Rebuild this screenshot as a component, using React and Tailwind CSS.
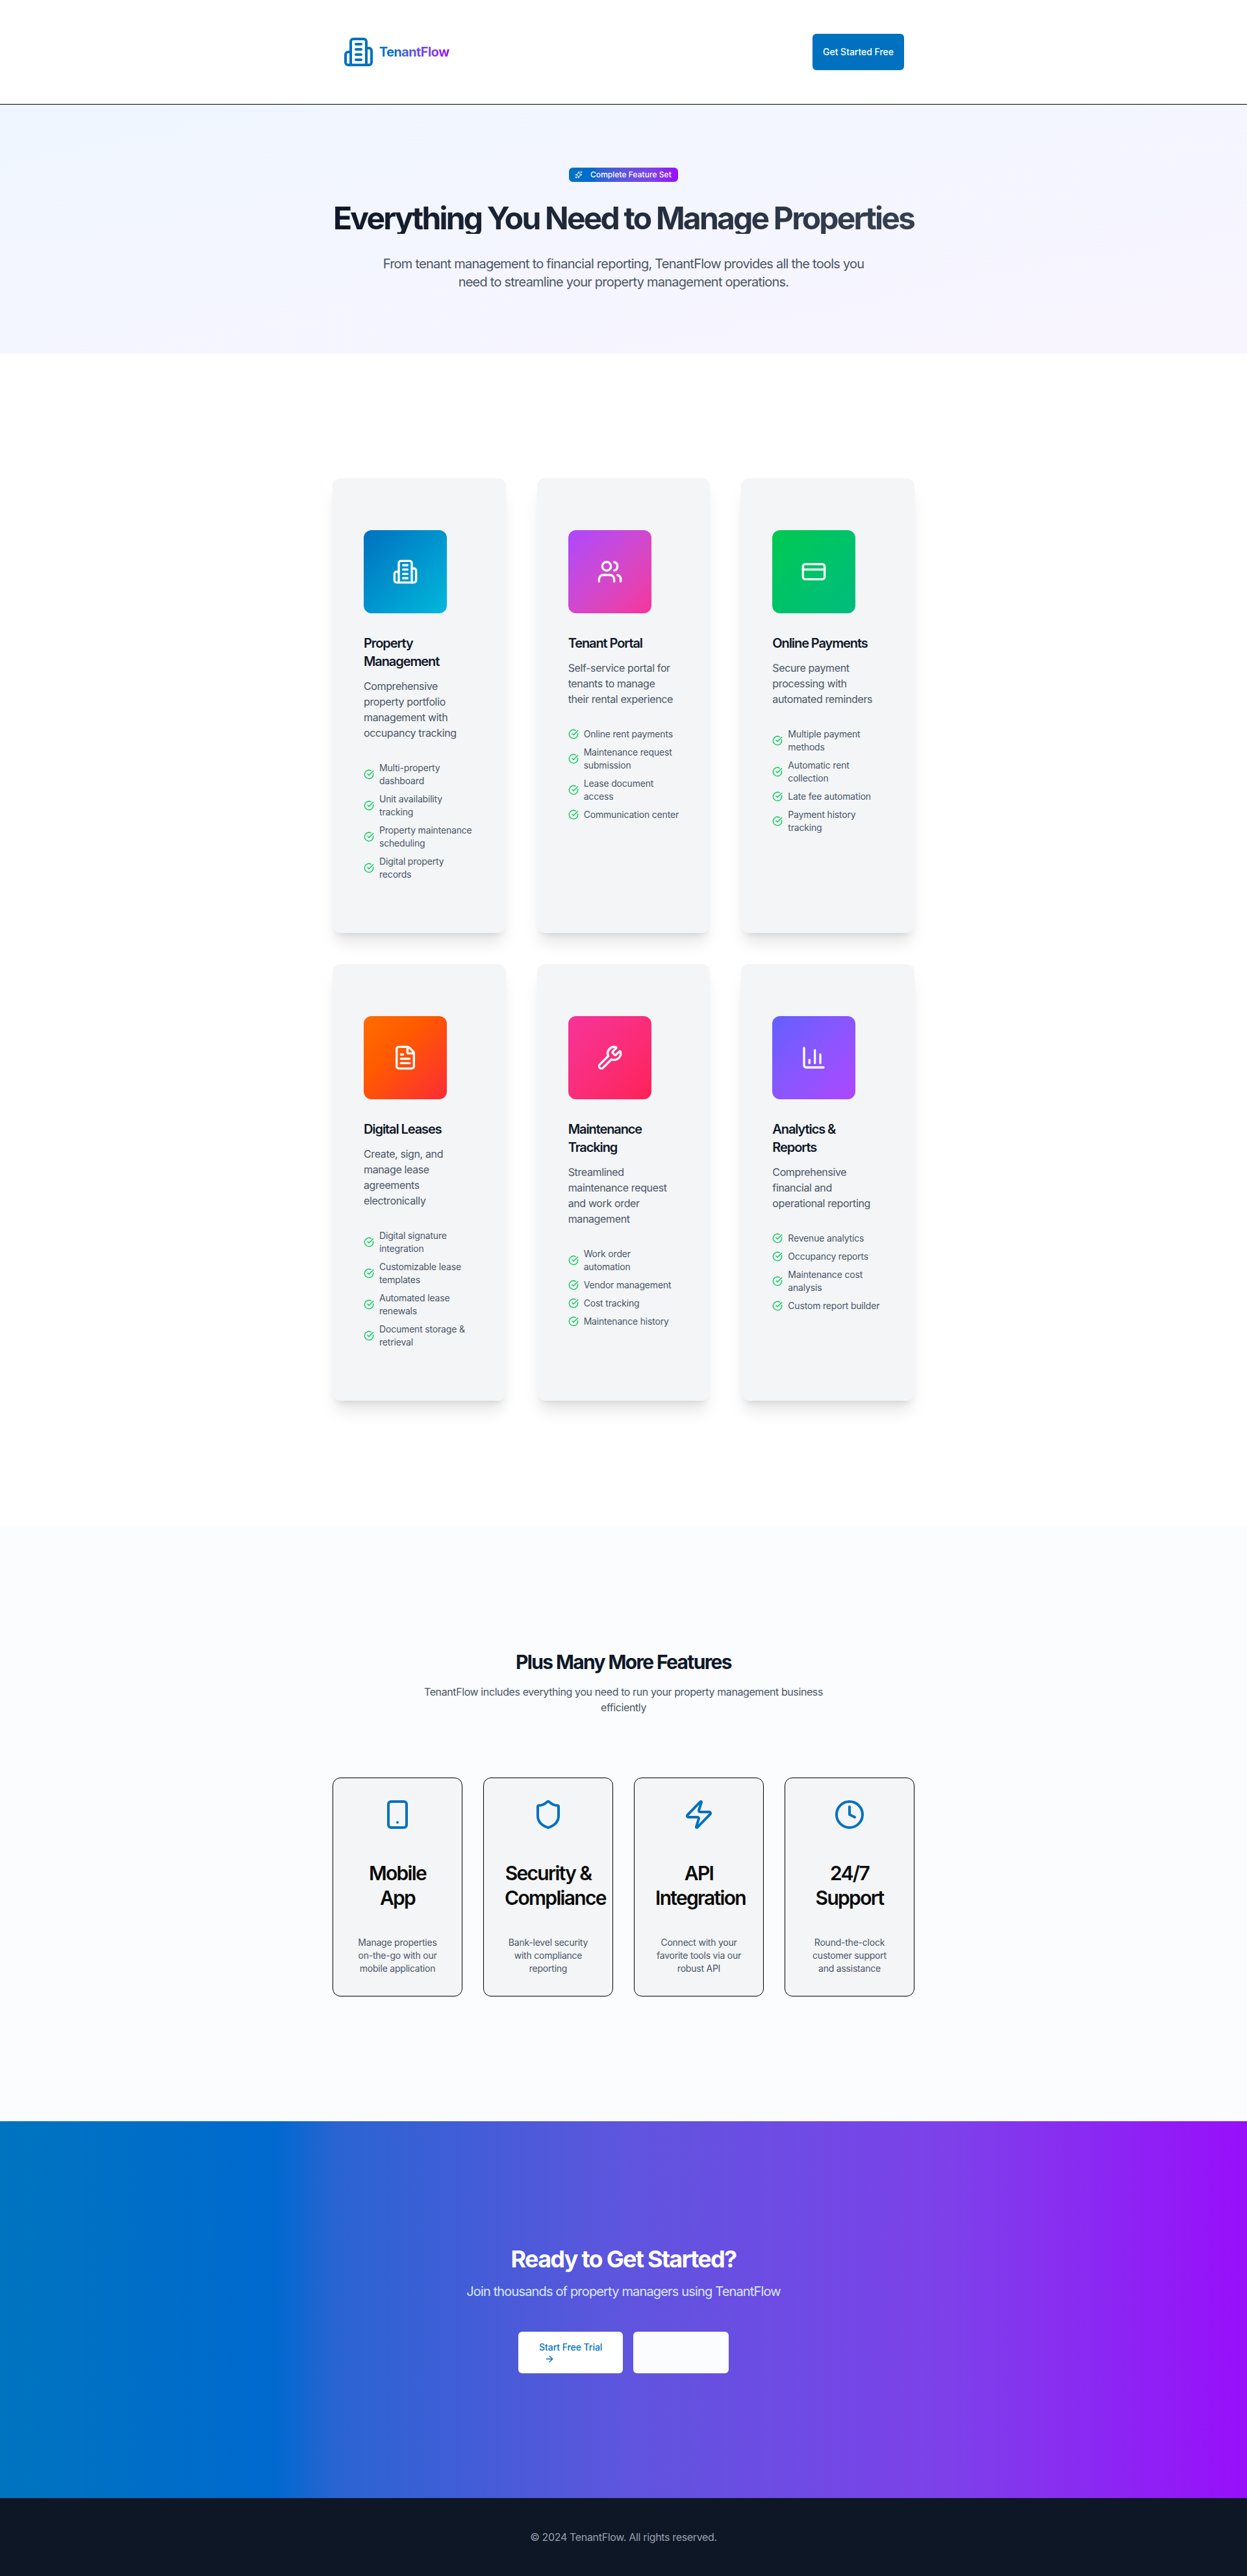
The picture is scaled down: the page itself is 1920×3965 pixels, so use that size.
import React from "react";
import {
  Users, CreditCard, FileText, Wrench, ChartColumn, CircleCheckBig,
  Smartphone, Shield, Zap, Clock, Sparkles, ArrowRight,
} from "lucide-react";

function Building({ className }) {
  return (
    <svg className={className} viewBox="0 0 24 24" fill="none" stroke="currentColor" strokeWidth="2" strokeLinecap="round" strokeLinejoin="round">
      <path d="M6 22V4a2 2 0 0 1 2-2h8a2 2 0 0 1 2 2v18Z" />
      <path d="M6 12H4a2 2 0 0 0-2 2v6a2 2 0 0 0 2 2h2" />
      <path d="M18 9h2a2 2 0 0 1 2 2v9a2 2 0 0 1-2 2h-2" />
      <path d="M10 6h4" />
      <path d="M10 10h4" />
      <path d="M10 14h4" />
      <path d="M10 18h4" />
    </svg>
  );
}

const features = [
  {
    icon: Building,
    tile: "bg-linear-to-br from-[#0071bf] to-[#00b8db]",
    title: "Property Management",
    text: "Comprehensive property portfolio management with occupancy tracking",
    items: ["Multi-property dashboard", "Unit availability tracking", "Property maintenance scheduling", "Digital property records"],
  },
  {
    icon: Users,
    tile: "bg-linear-to-br from-[#ad46ff] to-[#f6339a]",
    title: "Tenant Portal",
    text: "Self-service portal for tenants to manage\ntheir rental experience",
    items: ["Online rent payments", "Maintenance request submission", "Lease document access", "Communication center"],
  },
  {
    icon: CreditCard,
    tile: "bg-linear-to-br from-[#00c950] to-[#00bc7d]",
    title: "Online Payments",
    text: "Secure payment processing with automated reminders",
    items: ["Multiple payment methods", "Automatic rent collection", "Late fee automation", "Payment history tracking"],
  },
  {
    icon: FileText,
    tile: "bg-[linear-gradient(to_bottom_right,#ff6d00,#ff5a00_38%,#fb2c36)]",
    title: "Digital Leases",
    text: "Create, sign, and manage lease agreements electronically",
    items: ["Digital signature integration", "Customizable lease templates", "Automated lease renewals", "Document storage & retrieval"],
  },
  {
    icon: Wrench,
    tile: "bg-linear-to-br from-[#f6339a] to-[#ff2056]",
    title: "Maintenance Tracking",
    text: "Streamlined maintenance request and work order management",
    items: ["Work order automation", "Vendor management", "Cost tracking", "Maintenance history"],
  },
  {
    icon: ChartColumn,
    tile: "bg-linear-to-br from-[#615fff] to-[#ad46ff]",
    title: "Analytics &\nReports",
    text: "Comprehensive financial and operational reporting",
    items: ["Revenue analytics", "Occupancy reports", "Maintenance cost analysis", "Custom report builder"],
  },
];

const extras = [
  { icon: Smartphone, title: "Mobile App", text: "Manage properties on-the-go with our mobile application" },
  { icon: Shield, title: "Security & Compliance", text: "Bank-level security with compliance reporting" },
  { icon: Zap, title: "API Integration", text: "Connect with your favorite tools via our robust API" },
  { icon: Clock, title: "24/7 Support", text: "Round-the-clock customer support and assistance" },
];

function FeatureCard({ icon: Icon, tile, title, text, items }) {
  return (
    <div className="rounded-xl bg-[#f3f5f7] px-12 py-20 shadow-xl">
      <div className={"mb-8 flex size-32 items-center justify-center rounded-xl " + tile}>
        <Icon className="size-10 text-white" />
      </div>
      <h3 className="mb-3 text-xl font-semibold tracking-[-0.055em] whitespace-pre-line text-[#101828]">{title}</h3>
      <p className="mb-8 text-base tracking-[-0.023em] whitespace-pre-line text-[#4a5565]">{text}</p>
      <ul className="space-y-2">
        {items.map((item) => (
          <li key={item} className="flex items-center gap-2 text-sm tracking-[-0.013em] text-[#4a5565]">
            <CircleCheckBig className="size-4 shrink-0 text-[#00c950]" />
            <span>{item}</span>
          </li>
        ))}
      </ul>
    </div>
  );
}

export default function App() {
  return (
    <div className="min-h-screen bg-white font-['Inter',sans-serif]">
      <header className="border-b border-black bg-white">
        <div className="mx-auto flex h-40 max-w-4xl items-center justify-between px-4">
          <div className="flex items-center gap-2">
            <Building className="size-12 text-[#0071bf]" />
            <span className="bg-[linear-gradient(to_right,#0074bf,#0069cf_22%,#2a64d2_27%,#5f55de_50%,#7d41ea_76%,#980ffa)] bg-clip-text text-xl font-bold tracking-[-0.031em] text-transparent">TenantFlow</span>
          </div>
          <a className="flex h-14 items-center rounded-md bg-[#0071bf] px-4 text-sm font-medium tracking-[-0.002em] text-white">Get Started Free</a>
        </div>
      </header>

      <section className="bg-linear-to-br from-[#eff6ff] to-[#f9f5ff] pt-[97px] pb-24 text-center">
        <div className="mx-auto max-w-4xl">
          <div className="mx-auto mb-8 flex h-[22px] w-[168px] items-center rounded-md bg-[linear-gradient(to_right,#0074bf,#0069cf_22%,#2a64d2_27%,#5f55de_50%,#7d41ea_76%,#980ffa)] pl-[9px] text-xs font-medium tracking-[0.004em] whitespace-nowrap text-white">
            <Sparkles className="mr-3 size-3 shrink-0" />
            Complete Feature Set
          </div>
          <h1 className="mb-8 bg-linear-to-r from-[#101828] to-[#364153] bg-clip-text text-5xl leading-none font-bold tracking-[-0.0586em] whitespace-nowrap text-transparent">
            Everything You Need to Manage Properties
          </h1>
          <p className="mx-auto max-w-3xl text-xl tracking-[-0.038em] text-[#4a5565]">
            From tenant management to financial reporting, TenantFlow provides all the tools you need to streamline your property management operations.
          </p>
        </div>
      </section>

      <section className="bg-white py-48">
        <div className="mx-auto grid max-w-4xl grid-cols-3 gap-12">
          {features.map((f) => <FeatureCard key={f.title} {...f} />)}
        </div>
      </section>

      <section className="bg-[#fafcfe] py-48">
        <div className="mx-auto max-w-4xl">
          <div className="mb-24 text-center">
            <h2 className="mb-4 text-3xl font-bold tracking-[-0.055em] text-[#101828]">Plus Many More Features</h2>
            <p className="mx-auto max-w-2xl text-base tracking-[-0.025em] text-[#4a5565]">
              TenantFlow includes everything you need to run your property management business efficiently
            </p>
          </div>
          <div className="grid grid-cols-4 gap-8">
            {extras.map(({ icon: Icon, title, text }) => (
              <div key={title} className="rounded-xl border border-black bg-[#f3f5f7] p-8 text-center">
                <Icon className="mx-auto mb-12 size-12 text-[#0071bf]" />
                <h3 className="mb-10 text-3xl leading-[37.5px] font-semibold tracking-[-0.056em] text-[#0a0a0a]">{title}</h3>
                <p className="text-sm tracking-[-0.016em] text-[#4a5565]">{text}</p>
              </div>
            ))}
          </div>
        </div>
      </section>

      <section className="bg-[linear-gradient(to_right,#0074bf,#0069cf_22%,#2a64d2_27%,#5f55de_50%,#7d41ea_76%,#980ffa)] py-48 text-center">
        <h2 className="mb-4 text-4xl font-bold tracking-[-0.048em] text-white">Ready to Get Started?</h2>
        <p className="mb-12 text-xl tracking-[-0.042em] text-[#dbeafe]">Join thousands of property managers using TenantFlow</p>
        <div className="flex justify-center gap-4">
          <a className="flex h-16 w-[161px] flex-col items-start justify-center rounded-md bg-white px-8 text-sm font-medium tracking-[-0.004em] whitespace-nowrap text-[#0071bf]">
            Start Free Trial
            <ArrowRight className="ml-2 size-4" />
          </a>
          <a className="h-16 w-[147px] rounded-md bg-[#fafcfe]" />
        </div>
      </section>

      <footer className="bg-[#0e1726] py-12 text-center text-base tracking-[-0.021em] text-[#99a1af]">© 2024 TenantFlow. All rights reserved.</footer>
    </div>
  );
}
